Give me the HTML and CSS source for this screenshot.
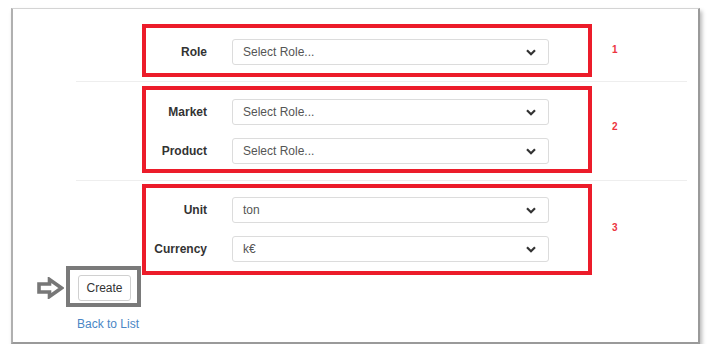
FILE: index.html
```html
<!DOCTYPE html>
<html>
<head>
<meta charset="utf-8">
<link rel="stylesheet" href="styles.css">
</head>
<body>
<div class="frame">
  <div class="form">
    <div class="group">
      <div class="hl hl-1">
        <div class="row">
          <label class="lbl">Role</label>
          <div class="select"><span>Select Role...</span><svg class="chev" width="10" height="7" viewBox="0 0 10 7"><path d="M1 1.2 L5 5.2 L9 1.2" fill="none" stroke="#333" stroke-width="2.2"/></svg></div>
        </div>
      </div>
      <span class="num num-1">1</span>
    </div>
    <hr class="sep sep-1">
    <div class="group">
      <div class="hl hl-2">
        <div class="row">
          <label class="lbl">Market</label>
          <div class="select"><span>Select Role...</span><svg class="chev" width="10" height="7" viewBox="0 0 10 7"><path d="M1 1.2 L5 5.2 L9 1.2" fill="none" stroke="#333" stroke-width="2.2"/></svg></div>
        </div>
        <div class="row">
          <label class="lbl">Product</label>
          <div class="select"><span>Select Role...</span><svg class="chev" width="10" height="7" viewBox="0 0 10 7"><path d="M1 1.2 L5 5.2 L9 1.2" fill="none" stroke="#333" stroke-width="2.2"/></svg></div>
        </div>
      </div>
      <span class="num num-2">2</span>
    </div>
    <hr class="sep sep-2">
    <div class="group">
      <div class="hl hl-3">
        <div class="row">
          <label class="lbl">Unit</label>
          <div class="select"><span>ton</span><svg class="chev" width="10" height="7" viewBox="0 0 10 7"><path d="M1 1.2 L5 5.2 L9 1.2" fill="none" stroke="#333" stroke-width="2.2"/></svg></div>
        </div>
        <div class="row">
          <label class="lbl">Currency</label>
          <div class="select"><span>k€</span><svg class="chev" width="10" height="7" viewBox="0 0 10 7"><path d="M1 1.2 L5 5.2 L9 1.2" fill="none" stroke="#333" stroke-width="2.2"/></svg></div>
        </div>
      </div>
      <span class="num num-3">3</span>
    </div>
  </div>
  <div class="actions">
    <svg class="arrow" width="27" height="22" viewBox="0 0 27 22"><path d="M2 7 H12.5 V2.5 L24.5 11 L12.5 19.5 V15 H2 Z" fill="none" stroke="#777" stroke-width="3.6" stroke-linejoin="miter"/></svg>
    <div class="btn-box"><button class="btn">Create</button></div>
  </div>
  <a class="back" href="#">Back to List</a>
</div>
</body>
</html>
```

FILE: styles.css
```css
html, body {
  margin: 0;
  padding: 0;
  background: #fff;
}
body {
  font-family: "Liberation Sans", Arial, sans-serif;
  font-size: 12px;
  color: #333;
}
.frame {
  margin: 8px 0 0 11px;
  width: 685px;
  height: 333px;
  border-top: 1px solid #d4d4d4;
  border-left: 2px solid #b0b0b0;
  border-right: 2px solid #9a9a9a;
  border-bottom: 2px solid #9a9a9a;
  box-shadow: 2px 3px 4px rgba(0,0,0,0.28);
  display: flex;
  flex-direction: column;
}
.form {
  margin: 15px 11px 0 63px;
  display: flex;
  flex-direction: column;
}
.group {
  display: flex;
  align-items: center;
}
.hl {
  margin-left: 66px;
  width: 442px;
  border: 4px solid #ec1c2a;
  display: flex;
  flex-direction: column;
  gap: 13px;
}
.hl-1 { padding: 11px 0 8px; }
.hl-2 { padding: 9px 0 5px; }
.hl-3 { padding: 9px 0 9px; }
.row {
  display: flex;
  align-items: center;
}
.lbl {
  width: 61px;
  margin-right: 25px;
  text-align: right;
  font-weight: bold;
  font-size: 12px;
  color: #333;
}
.select {
  height: 24px;
  border: 1px solid #dcdcdc;
  border-radius: 3px;
  display: flex;
  align-items: center;
  justify-content: space-between;
  padding: 0 12px 0 10px;
  width: 293px;
  color: #555;
  font-size: 12px;
}
.chev {
  display: block;
}
.num {
  margin-left: 20px;
  font-size: 10px;
  font-weight: bold;
  color: #ec3440;
}
.num-1 { margin-top: -3px; }
.num-2 { margin-top: -6px; }
.num-3 { margin-top: -4px; }
.sep {
  border: 0;
  height: 1px;
  background: #eeeeee;
  width: 611px;
  margin: 0;
}
.sep-1 { margin: 4px 0 4px; }
.sep-2 { margin: 7px 0 3px; }
.actions {
  margin: -9px 0 0 24px;
  display: flex;
  align-items: center;
  gap: 2px;
}
.arrow {
  display: block;
  margin-top: 2px;
}
.btn-box {
  border: 4px solid #7a7a7a;
  padding: 5px 6px 2px 8px;
  display: flex;
}
.btn {
  font-family: "Liberation Sans", Arial, sans-serif;
  font-size: 12px;
  color: #333;
  background: #fff;
  border: 1px solid #d0d0d0;
  border-radius: 3px;
  width: 53px;
  height: 26px;
  padding: 0;
}
.back {
  margin: 10px 0 0 64px;
  align-self: flex-start;
  color: #4a86c5;
  text-decoration: none;
  font-size: 12px;
}
```
